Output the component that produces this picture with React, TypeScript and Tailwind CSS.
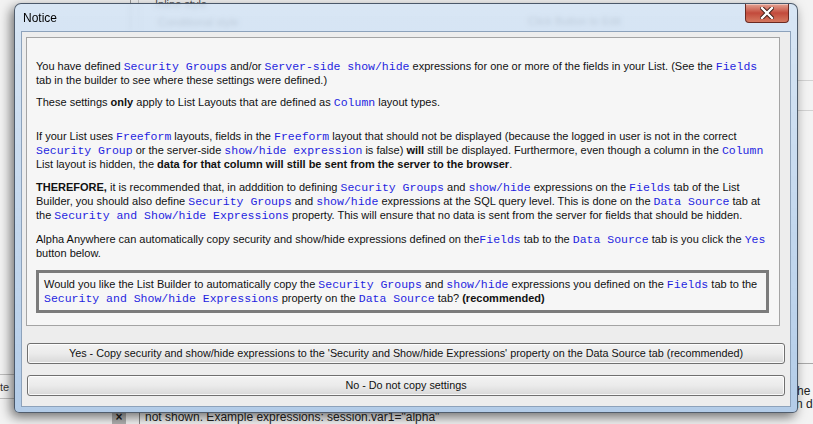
import React from "react";

const sans = "font-['Liberation_Sans',Arial,sans-serif]";

function M({ children }: { children: React.ReactNode }) {
  return (
    <span className="font-['Liberation_Mono','Courier_New',monospace] text-[11.5px] text-[#1f1fe0]">
      {children}
    </span>
  );
}

function L({ children }: { children: React.ReactNode }) {
  return <div className="h-[14px] leading-[14px] whitespace-nowrap">{children}</div>;
}

// the builder window that sits behind the dialog
function Backdrop() {
  return (
    <div className="absolute inset-0 flex flex-col bg-[#f3f3f3] text-[11px] text-[#333]">
      <div className="flex h-[31px] shrink-0">
        <div className="w-[130px]" />
        <div className="w-px bg-[#9a9a9a]" />
        <div className="w-[7px]" />
        <div className="w-px bg-[#c8c8c8]" />
        <div className="-mt-[5px] flex w-[389px] flex-col pl-[16px] leading-[18px] text-[#555]">
          <span>Inline style</span>
          <span className="pl-[3px]">Conditional style</span>
        </div>
        <div className="pt-[13px] text-[#555]">Click Button to Edit</div>
      </div>

      <div className="flex flex-1 justify-between">
        <div className="flex w-[15px] flex-col justify-end pb-[11px]">
          <div className="h-[25px] border-y border-[#bcbcbc] leading-[24px]">te</div>
        </div>
        <div className="flex w-[17px] flex-col">
          <div className="h-[50px] border-b border-[#d2d2d2]" />
          <div className="h-[30px] border-b border-[#d2d2d2]" />
          <div className="flex-1 border-b border-[#a8a8a8]" />
          <div className="h-[46px] whitespace-nowrap pl-[1px] pt-[21px] text-[12px] leading-[13px] text-[#222]">
            <div>he</div>
            <div className="-ml-[1px]">n de</div>
          </div>
        </div>
      </div>

      <div className="flex h-[14px] shrink-0 items-start pl-[112px]">
        <div className="flex h-[14px] w-[14px] items-center justify-center bg-[#b0b0b0] text-[12px] font-bold text-[#222]">×</div>
        <div className="ml-[13px] h-[16px] w-px -translate-y-[2px] bg-[#888]" />
        <div className="ml-[5px] text-[12px] leading-[14px] text-[#222]">not shown. Example expressions: session.var1="alpha"</div>
      </div>
    </div>
  );
}

function Button({ children }: { children: React.ReactNode }) {
  return (
    <div className="h-[21px] rounded-[3px] border border-[#707070] bg-gradient-to-b from-[#f3f3f3] via-[#ebebeb] to-[#d8d8d8] shadow-[inset_0_0_0_1px_rgba(255,255,255,0.8)]">
      <div className="flex h-full items-center justify-center text-[10.8px] text-[#111]">{children}</div>
    </div>
  );
}

export default function App() {
  return (
    <div className={`relative h-[424px] w-[813px] overflow-hidden ${sans}`}>
      <Backdrop />

      {/* dialog window */}
      <div className="absolute left-[14px] top-[3px] flex h-[410px] w-[784px] flex-col rounded-t-[7px] rounded-b-[5px] border border-[#2f3b4a]/80 bg-gradient-to-b from-[#d3e3f4]/85 via-[#bfd5ed]/90 to-[#b3cce8] shadow-[-3px_4px_12px_rgba(0,0,0,0.55)] backdrop-blur-[2px]">
        {/* title bar */}
        <div className="flex h-[27px] items-start justify-between">
          <div className="pl-[8px] pt-[7px] text-[12px] leading-[14px] text-black">Notice</div>
          <div className="mr-[8px] flex h-[19px] w-[44px] items-center justify-center rounded-[4px] rounded-t-none border border-t-0 border-[#6b2a22] bg-gradient-to-b from-[#e3a293] via-[#c24a3c] to-[#d47860] shadow-[inset_0_1px_0_rgba(255,255,255,0.4)]">
            <svg width="14" height="12" viewBox="0 0 14 12">
              <path d="M2 1 L12 11 M12 1 L2 11" stroke="#3a1a14" strokeWidth="4.2" strokeLinecap="square" />
              <path d="M2 1 L12 11 M12 1 L2 11" stroke="#ffffff" strokeWidth="2.4" strokeLinecap="square" />
            </svg>
          </div>
        </div>

        {/* client area */}
        <div className="mx-[6px] flex h-[376px] flex-col border border-[#8da2bb] bg-[#ededed] text-[11px] text-[#111]">
          <div className="ml-[4px] mr-[10px] mt-[5px] h-[289px] border border-[#a4a4a4] bg-[#f6f6f6] pl-[9px] pt-[21px]">
            <L>
              You have defined <M>Security Groups</M> and/or <M>Server-side show/hide</M> expressions for one or more of the fields in your List. (See the <M>Fields</M>
            </L>
            <L>tab in the builder to see where these settings were defined.)</L>

            <div className="mt-[8px]">
              <L>
                These settings <b>only</b> apply to List Layouts that are defined as <M>Column</M> layout types.
              </L>
            </div>

            <div className="mt-[20px]">
              <L>
                If your List uses <M>Freeform</M> layouts, fields in the <M>Freeform</M> layout that should not be displayed (because the logged in user is not in the correct
              </L>
              <L>
                <M>Security Group</M> or the server-side <M>show/hide expression</M> is false) <b>will</b> still be displayed. Furthermore, even though a column in the <M>Column</M>
              </L>
              <L>
                List layout is hidden, the <b>data for that column will still be sent from the server to the browser</b>.
              </L>
            </div>

            <div className="mt-[9px]">
              <L>
                <b>THEREFORE,</b> it is recommended that, in adddition to defining <M>Security Groups</M> and <M>show/hide</M> expressions on the <M>Fields</M> tab of the List
              </L>
              <L>
                Builder, you should also define <M>Security Groups</M> and <M>show/hide</M> expressions at the SQL query level. This is done on the <M>Data Source</M> tab at
              </L>
              <L>
                the <M>Security and Show/hide Expressions</M> property. This will ensure that no data is sent from the server for fields that should be hidden.
              </L>
            </div>

            <div className="mt-[10px]">
              <L>
                Alpha Anywhere can automatically copy security and show/hide expressions defined on the<M>Fields</M> tab to the <M>Data Source</M> tab is you click the <M>Yes</M>
              </L>
              <L>button below.</L>
            </div>

            <div className="mr-[10px] mt-[10px] h-[43px] border-[3px] border-[#7c7c7c] pl-[5px] pt-[4px]">
              <L>
                Would you like the List Builder to automatically copy the <M>Security Groups</M> and <M>show/hide</M> expressions you defined on the <M>Fields</M> tab to the
              </L>
              <L>
                <M>Security and Show/hide Expressions</M> property on the <M>Data Source</M> tab? <b>(recommended)</b>
              </L>
            </div>
          </div>

          <div className="mx-[5px] mt-[17px] flex flex-col gap-[11px]">
            <Button>
              Yes - Copy security and show/hide expressions to the 'Security and Show/hide Expressions' property on the Data Source tab (recommended)
            </Button>
            <Button>No - Do not copy settings</Button>
          </div>
        </div>
      </div>
    </div>
  );
}
